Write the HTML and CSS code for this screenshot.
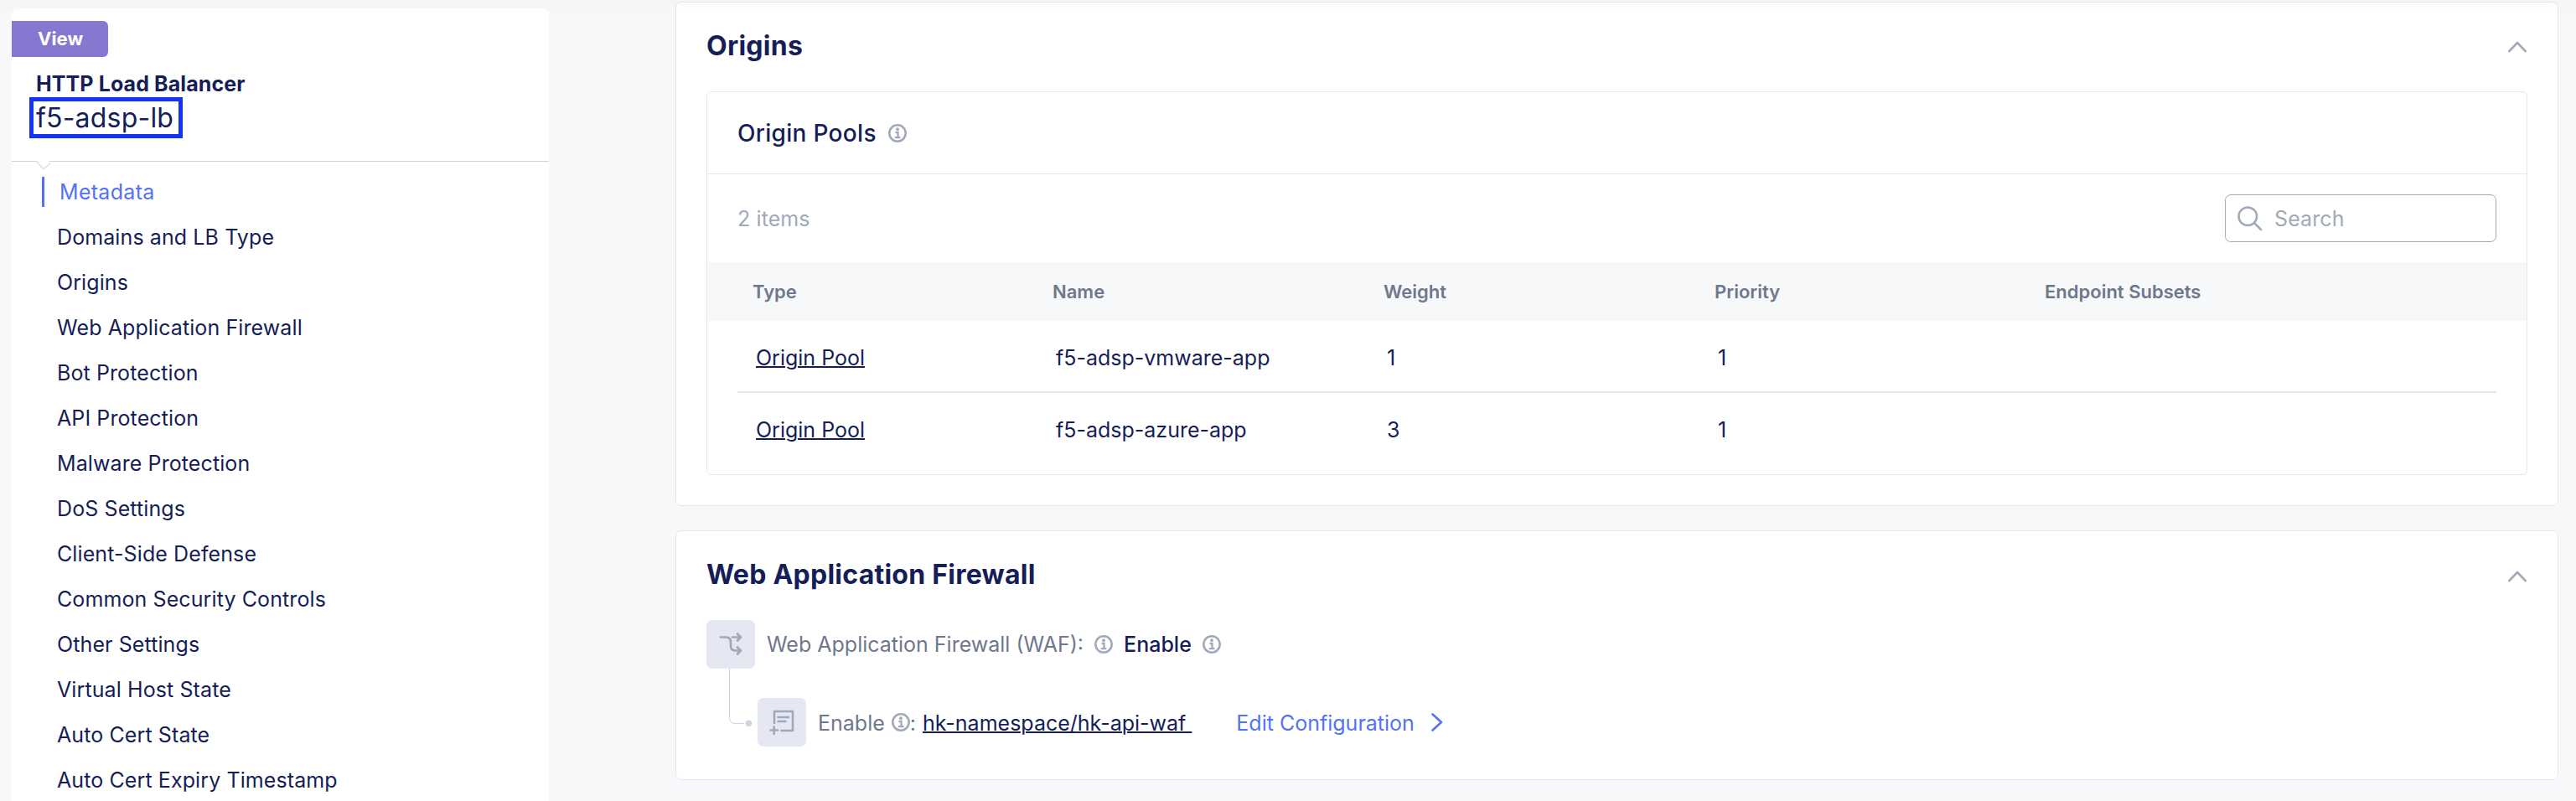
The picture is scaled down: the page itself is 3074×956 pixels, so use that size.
FILE: index.html
```html
<!DOCTYPE html>
<html lang="en">
<head>
<meta charset="utf-8">
<title>HTTP Load Balancer</title>
<link rel="stylesheet" href="styles.css">
</head>
<body>
<svg class="sprite" aria-hidden="true">
  <symbol id="info" viewBox="0 0 22 22">
    <circle cx="11" cy="11" r="9.700" fill="none" stroke="currentColor" stroke-width="2.600"/>
    <circle cx="11" cy="6.200" r="1.900" fill="currentColor"/>
    <path d="M8.500 10h3v5.800M7.800 16.200h6.600" fill="none" stroke="currentColor" stroke-width="2.300"/>
  </symbol>
  <symbol id="chevron-up" viewBox="0 0 22 14">
    <path d="M1.300 12.200 11 2l9.700 10.200" fill="none" stroke="currentColor" stroke-width="2.600" stroke-linecap="round" stroke-linejoin="round"/>
  </symbol>
</svg>
<div class="page">
  <aside class="sidebar">
    <header class="side-head">
      <span class="tag">View</span>
      <h1 class="side-title">HTTP Load Balancer</h1>
      <span class="object-name">f5-adsp-lb</span>
      <svg class="notch" viewBox="0 0 18 12"><path d="M.5 0 9 10 17 1 14 0z" fill="#fff"/><path d="M.5 .5 9 10 17 2.500" fill="none" stroke="#d5d9e6" stroke-width="1.200"/></svg>
    </header>
    <nav class="side-nav">
      <a class="nav-item active">Metadata</a>
      <a class="nav-item">Domains and LB Type</a>
      <a class="nav-item">Origins</a>
      <a class="nav-item">Web Application Firewall</a>
      <a class="nav-item">Bot Protection</a>
      <a class="nav-item">API Protection</a>
      <a class="nav-item">Malware Protection</a>
      <a class="nav-item">DoS Settings</a>
      <a class="nav-item">Client-Side Defense</a>
      <a class="nav-item">Common Security Controls</a>
      <a class="nav-item">Other Settings</a>
      <a class="nav-item">Virtual Host State</a>
      <a class="nav-item">Auto Cert State</a>
      <a class="nav-item">Auto Cert Expiry Timestamp</a>
    </nav>
  </aside>
  <main class="main">
    <section class="card origins">
      <div class="card-head">
        <h2 class="card-title">Origins</h2>
        <svg class="chev"><use href="#chevron-up"/></svg>
      </div>
      <div class="panel">
        <div class="panel-head">Origin Pools <svg class="info"><use href="#info"/></svg></div>
        <div class="toolbar">
          <span class="count">2 items</span>
          <div class="search">
            <svg class="search-icon" viewBox="0 0 30 30"><circle cx="12.300" cy="12.300" r="10.800" fill="none" stroke="currentColor" stroke-width="2.500"/><path d="M20.300 20.300 28 28" stroke="currentColor" stroke-width="2.600" stroke-linecap="round"/></svg>
            <span>Search</span>
          </div>
        </div>
        <div class="grid-row table-head">
          <span>Type</span><span>Name</span><span>Weight</span><span>Priority</span><span>Endpoint Subsets</span>
        </div>
        <div class="table-body">
          <div class="grid-row table-row"><span><a class="link">Origin Pool</a></span><span>f5-adsp-vmware-app</span><span>1</span><span>1</span><span></span></div>
          <div class="grid-row table-row"><span><a class="link">Origin Pool</a></span><span>f5-adsp-azure-app</span><span>3</span><span>1</span><span></span></div>
        </div>
      </div>
    </section>
    <section class="card waf">
      <div class="card-head">
        <h2 class="card-title">Web Application Firewall</h2>
        <svg class="chev"><use href="#chevron-up"/></svg>
      </div>
      <div class="tree-row">
        <span class="node-icon"><svg viewBox="0 0 58 58"><g fill="none" stroke="currentColor" stroke-width="2.700" stroke-linecap="round" stroke-linejoin="round"><path d="M17 20.500h6q6 0 6 6v4q0 6 6 6h6M31 20.500h10M37 16.500l4 4-4 4M37 32.500l4 4-4 4"/></g></svg></span>
        <span class="label">Web Application Firewall (WAF):</span>
        <svg class="info"><use href="#info"/></svg>
        <span class="value">Enable</span>
        <svg class="info"><use href="#info"/></svg>
      </div>
      <div class="tree-row child">
        <svg class="connector" viewBox="0 0 30 72"><path d="M1.500 0v60q0 6.500 6.500 6.500h11" fill="none" stroke="#cfd4e3"/><circle cx="24.500" cy="66.300" r="3.800" fill="#cfd4e3"/></svg>
        <span class="node-icon"><svg viewBox="0 0 58 58"><g fill="none" stroke="currentColor" stroke-width="2.600" stroke-linecap="round" stroke-linejoin="round"><path d="M20 30V16h22v23H28.500M24.500 23h12.500M24.500 28h9M15.500 38.500h8.500M19.700 34.500v8.500"/></g></svg></span>
        <span class="label">Enable</span>
        <svg class="info"><use href="#info"/></svg>
        <span class="label">:</span>
        <a class="link ref">hk-namespace/hk-api-waf&nbsp;</a>
        <a class="edit">Edit Configuration</a>
        <svg class="go" viewBox="0 0 14 22"><path d="M1.500 1.500 12 11 1.500 20.500" fill="none" stroke="currentColor" stroke-width="2.600" stroke-linecap="round" stroke-linejoin="round"/></svg>
      </div>
    </section>
  </main>
</div>
</body>
</html>
```
FILE: styles.css
```css
* { box-sizing: border-box; }
body {
  margin: 0;
  background: #f7f8fa;
  color: #151e58;
  font-family: Inter, "Liberation Sans", sans-serif;
  font-size: 25px;
  font-weight: 370;
  letter-spacing: .1px;
  line-height: 32px;
}
body::before {
  content: "";
  position: absolute;
  top: 0;
  left: 0;
  right: 0;
  height: 14px;
  background: linear-gradient(rgba(0, 0, 0, .012), rgba(0, 0, 0, .006));
}
h1, h2 { margin: 0; }
svg { display: block; flex: none; }
.sprite { position: absolute; width: 0; height: 0; }
.page {
  display: flex;
  justify-content: space-between;
  height: 956px;
  padding: 2px 21px 0 14px;
  overflow: hidden;
}
.sidebar {
  width: 641px;
  height: 960px;
  margin-top: 8px;
  background: #fff;
  border-radius: 8px 8px 0 0;
}
.side-head {
  position: relative;
  display: flex;
  flex-direction: column;
  align-items: flex-start;
  height: 183px;
  padding-top: 15px;
  border-bottom: 1px solid #cdd2e2;
}
.tag {
  width: 115px;
  height: 43px;
  padding-left: 31px;
  background: #8678d1;
  border-radius: 0 6px 6px 0;
  color: #fff;
  font-size: 22px;
  font-weight: 700;
  line-height: 43px;
}
.side-title {
  margin: 16px 0 0 29px;
  font-size: 25px;
  font-weight: 700;
  line-height: 32px;
}
.object-name {
  width: 183px;
  height: 49px;
  margin: 0 0 0 21px;
  padding-left: 3px;
  border: 5px solid #1232f5;
  font-size: 32px;
  letter-spacing: .2px;
  line-height: 40px;
}
.notch { position: absolute; left: 29px; bottom: -12px; width: 18px; height: 12px; }
.side-nav { display: flex; flex-direction: column; padding-top: 9px; }
.nav-item { height: 54px; padding-left: 54px; line-height: 55px; }
.nav-item.active {
  height: 36px;
  margin: 9px 0 9px 36px;
  padding-left: 18px;
  border-left: 3px solid #5472f6;
  color: #5472f6;
  letter-spacing: .3px;
  line-height: 37px;
}
.main { display: flex; flex-direction: column; gap: 29px; width: 2247px; }
.card {
  padding: 0 36px;
  background: #fff;
  border: 1px solid #e4e7f0;
  border-radius: 7px;
}
.card.origins { height: 602px; }
.card.waf { height: 298px; }
.card-head { display: flex; align-items: center; justify-content: space-between; height: 106px; }
.card-title { padding-bottom: 2px; font-size: 32px; font-weight: 700; letter-spacing: .25px; line-height: 40px; }
.chev { width: 22px; height: 14px; margin-right: 1px; color: #a1a8ba; }
.waf .chev { margin-top: 2px; }
.panel { height: 458px; border: 1px solid #e4e7f2; border-radius: 6px; }
.panel-head {
  display: flex;
  align-items: center;
  gap: 14px;
  height: 98px;
  padding-left: 36px;
  border-bottom: 1px solid #e4e7f2;
  font-size: 28px;
  font-weight: 500;
  letter-spacing: .3px;
}
.info { width: 22px; height: 22px; color: #a1a8ba; }
.toolbar {
  display: flex;
  align-items: center;
  justify-content: space-between;
  height: 105px;
  padding: 0 36px;
  color: #a1a8ba;
}
.search {
  display: flex;
  align-items: center;
  gap: 14px;
  width: 324px;
  height: 57px;
  padding-left: 14px;
  border: 1px solid #a1a8ba;
  border-radius: 7px;
}
.search-icon { width: 30px; height: 30px; }
.grid-row { display: grid; grid-template-columns: 358px 395px 395px 394px 1fr; align-items: center; }
.table-head {
  height: 70px;
  padding-left: 54px;
  background: #f7f8fa;
  color: #6f778d;
  font-size: 22px;
  font-weight: 600;
  letter-spacing: 0;
}
.table-body { padding: 0 36px; }
.table-row { height: 86px; padding: 2px 0 0 22px; letter-spacing: 0; }
.table-row:first-child { border-bottom: 2px solid #e4e8f2; padding-top: 4px; }
.link { text-decoration: underline; text-decoration-thickness: 2px; }
.tree-row { display: flex; align-items: center; height: 58px; letter-spacing: 0; }
.tree-row.child { margin-top: 35px; padding-left: 26px; }
.node-icon {
  width: 58px;
  height: 58px;
  margin-right: 14px;
  background: #e5e8f2;
  border-radius: 7px;
  color: #a1a8ba;
}
.label { color: #6f778d; }
.tree-row:not(.child) .info { margin: 0 13px; }
.value { font-weight: 500; }
.connector { width: 30px; height: 72px; margin: -58px 5px 0 0; }
.child .label, .child .link, .child .edit { padding-top: 1px; }
.child .info { margin: 0 0 0 8px; }
.ref { margin-left: 8px; }
.edit { margin: 0 20px 0 53px; color: #5472f6; }
.go { width: 14px; height: 22px; color: #5472f6; }
```
